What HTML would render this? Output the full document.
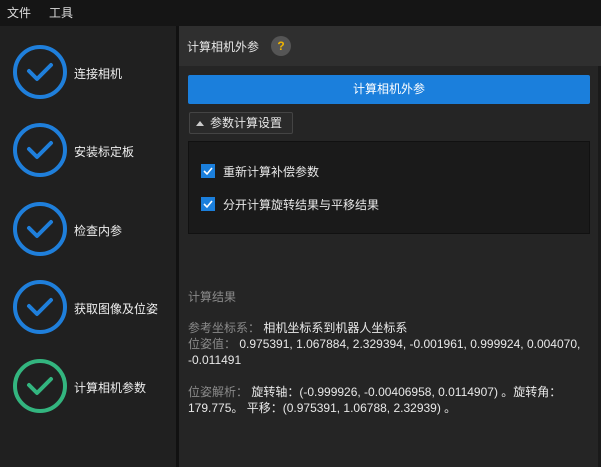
<!DOCTYPE html>
<html><head><meta charset="utf-8"><style>
*{margin:0;padding:0;box-sizing:border-box}
body{width:601px;height:467px;background:#252525;font-family:"Liberation Sans","Noto Sans CJK SC",sans-serif;font-size:12px;color:#e8e8e8;position:relative;overflow:hidden}
.abs{position:absolute}
.menu{left:0;top:0;width:601px;height:26px;background:#151515}
.menu span{position:absolute;top:4px;font-size:12px;color:#ddd}
.left{left:0;top:26px;width:176px;height:441px;background:#202020}
.div{left:176px;top:26px;width:3px;height:441px;background:#111}
.circ{position:absolute;left:13px;width:54px;height:54px;border:4px solid #1f7fdb;border-radius:50%}
.circ svg{position:absolute;left:9px;top:11px}
.lbl{position:absolute;left:74px;font-size:12px;color:#eee}
.head{left:179px;top:26px;width:422px;height:40px;background:#2f2f2f}
.btn{left:188px;top:75px;width:402px;height:29px;background:#1b7fdc;color:#fff;text-align:center;line-height:29px;border-radius:2px}
.tog{left:189px;top:112px;width:104px;height:22px;border:1px solid #444;background:#2a2a2a;border-radius:2px;line-height:20px;padding-left:20px}
.grp{left:188px;top:141px;width:402px;height:93px;background:#1a1a1a;border:1px solid #111}
.cb{position:absolute;left:12px;width:14px;height:14px;background:#1b7fdc}
.g{color:#8a8a8a}
</style></head><body>
<div class="abs menu"><span style="left:7px">文件</span><span style="left:49px">工具</span></div>
<div class="abs left">
<div class="circ" style="top:19px"><svg width="28" height="24"><path d="M3 11 L11 19 L25 5" stroke="#1f7fdb" stroke-width="4" fill="none" stroke-linecap="round" stroke-linejoin="round"/></svg></div>
<div class="lbl" style="top:39px">连接相机</div>
<div class="circ" style="top:97px"><svg width="28" height="24"><path d="M3 11 L11 19 L25 5" stroke="#1f7fdb" stroke-width="4" fill="none" stroke-linecap="round" stroke-linejoin="round"/></svg></div>
<div class="lbl" style="top:117px">安装标定板</div>
<div class="circ" style="top:176px"><svg width="28" height="24"><path d="M3 11 L11 19 L25 5" stroke="#1f7fdb" stroke-width="4" fill="none" stroke-linecap="round" stroke-linejoin="round"/></svg></div>
<div class="lbl" style="top:196px">检查内参</div>
<div class="circ" style="top:254px"><svg width="28" height="24"><path d="M3 11 L11 19 L25 5" stroke="#1f7fdb" stroke-width="4" fill="none" stroke-linecap="round" stroke-linejoin="round"/></svg></div>
<div class="lbl" style="top:274px">获取图像及位姿</div>
<div class="circ" style="top:333px;border-color:#33b57f"><svg width="28" height="24"><path d="M3 11 L11 19 L25 5" stroke="#33b57f" stroke-width="4" fill="none" stroke-linecap="round" stroke-linejoin="round"/></svg></div>
<div class="lbl" style="top:353px">计算相机参数</div>
</div>
<div class="abs div"></div>
<div class="abs head"><span class="abs" style="left:8px;top:12px">计算相机外参</span><div class="abs" style="left:92px;top:10px;width:20px;height:20px;border-radius:50%;background:#555;color:#f0b400;text-align:center;line-height:20px;font-size:12px;font-weight:bold">?</div></div>
<div class="abs btn">计算相机外参</div>
<div class="abs tog"><svg class="abs" style="left:6px;top:8px" width="8" height="5"><path d="M0 5 L4 0 L8 5Z" fill="#ccc"/></svg>参数计算设置</div>
<div class="abs grp">
<div class="cb" style="top:22px"><svg width="14" height="14"><path d="M3 7 L6 10 L11 4" stroke="#fff" stroke-width="1.6" fill="none"/></svg></div>
<span class="abs" style="left:34px;top:21px">重新计算补偿参数</span>
<div class="cb" style="top:55px"><svg width="14" height="14"><path d="M3 7 L6 10 L11 4" stroke="#fff" stroke-width="1.6" fill="none"/></svg></div>
<span class="abs" style="left:34px;top:54px">分开计算旋转结果与平移结果</span>
</div>
<div class="abs g" style="left:188px;top:288px">计算结果</div>
<div class="abs" style="left:188px;top:320px;line-height:16px;width:410px">
<div><span class="g">参考坐标系：</span> 相机坐标系到机器人坐标系</div>
<div><span class="g">位姿值：</span> 0.975391, 1.067884, 2.329394, -0.001961, 0.999924, 0.004070,</div>
<div>-0.011491</div>
<div style="height:16px"></div>
<div><span class="g">位姿解析：</span> 旋转轴：(-0.999926, -0.00406958, 0.0114907) 。旋转角：</div>
<div>179.775。 平移：(0.975391, 1.06788, 2.32939) 。</div>
</div>
<div class="abs" style="left:598px;top:66px;width:3px;height:401px;background:#1a1a1a"></div>
</body></html>
